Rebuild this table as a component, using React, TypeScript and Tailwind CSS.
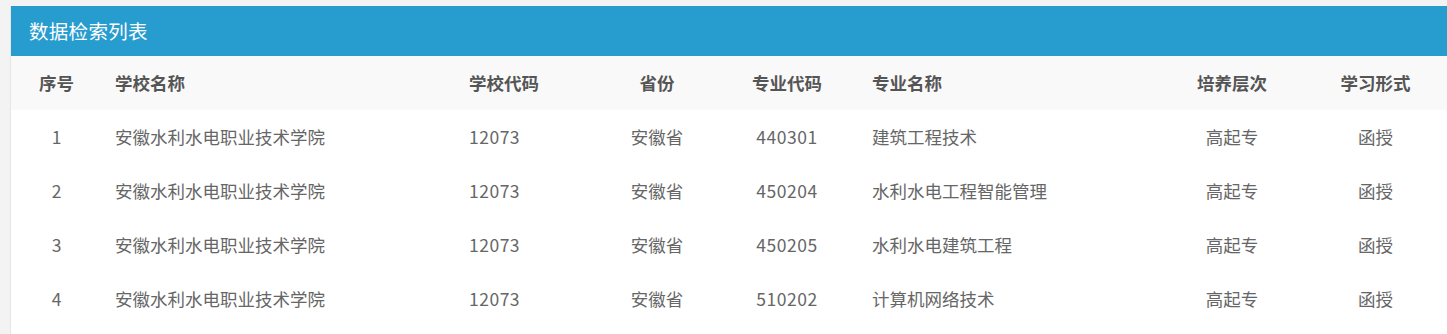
const rows = [
  { no: 1, school: "安徽水利水电职业技术学院", code: "12073", prov: "安徽省", major: "440301", name: "建筑工程技术", level: "高起专", mode: "函授" },
  { no: 2, school: "安徽水利水电职业技术学院", code: "12073", prov: "安徽省", major: "450204", name: "水利水电工程智能管理", level: "高起专", mode: "函授" },
  { no: 3, school: "安徽水利水电职业技术学院", code: "12073", prov: "安徽省", major: "450205", name: "水利水电建筑工程", level: "高起专", mode: "函授" },
  { no: 4, school: "安徽水利水电职业技术学院", code: "12073", prov: "安徽省", major: "510202", name: "计算机网络技术", level: "高起专", mode: "函授" },
];

const cols = "grid grid-cols-[91px_354px_134px_134px_126px_310px_144px_1fr] items-center";

const App = () => {
  return (
    <div
      className="h-[334px] w-full bg-[#f3f3f3] pt-[6px] pl-[10px] flex flex-col"
      style={{ fontFamily: '"Microsoft YaHei", "Noto Sans CJK SC", "Noto Sans", sans-serif' }}
    >
      <div className="flex-1 bg-white border-l border-[#e6e6e6]">
        <div className="h-[50px] bg-[#269ccf] flex items-center pl-[18px] text-white text-[19.5px] tracking-[0.3px]">
          数据检索列表
        </div>
        <div className={`${cols} h-[54px] bg-[#f9f9f9] text-[17.5px] font-bold text-[#555555]`}>
          <div className="text-center">序号</div>
          <div className="pl-[13px]">学校名称</div>
          <div className="pl-[13px]">学校代码</div>
          <div className="text-center">省份</div>
          <div className="text-center">专业代码</div>
          <div className="pl-[22px]">专业名称</div>
          <div className="text-center">培养层次</div>
          <div className="text-center">学习形式</div>
        </div>
        {rows.map((r) => (
          <div key={r.no} className={`${cols} h-[54px] text-[17.5px] text-[#666666]`}>
            <div className="text-center">{r.no}</div>
            <div className="pl-[13px]">{r.school}</div>
            <div className="pl-[13px] tracking-[0.5px]">{r.code}</div>
            <div className="text-center">{r.prov}</div>
            <div className="text-center tracking-[0.5px]">{r.major}</div>
            <div className="pl-[22px]">{r.name}</div>
            <div className="text-center">{r.level}</div>
            <div className="text-center">{r.mode}</div>
          </div>
        ))}
      </div>
    </div>
  );
};

export default App;
